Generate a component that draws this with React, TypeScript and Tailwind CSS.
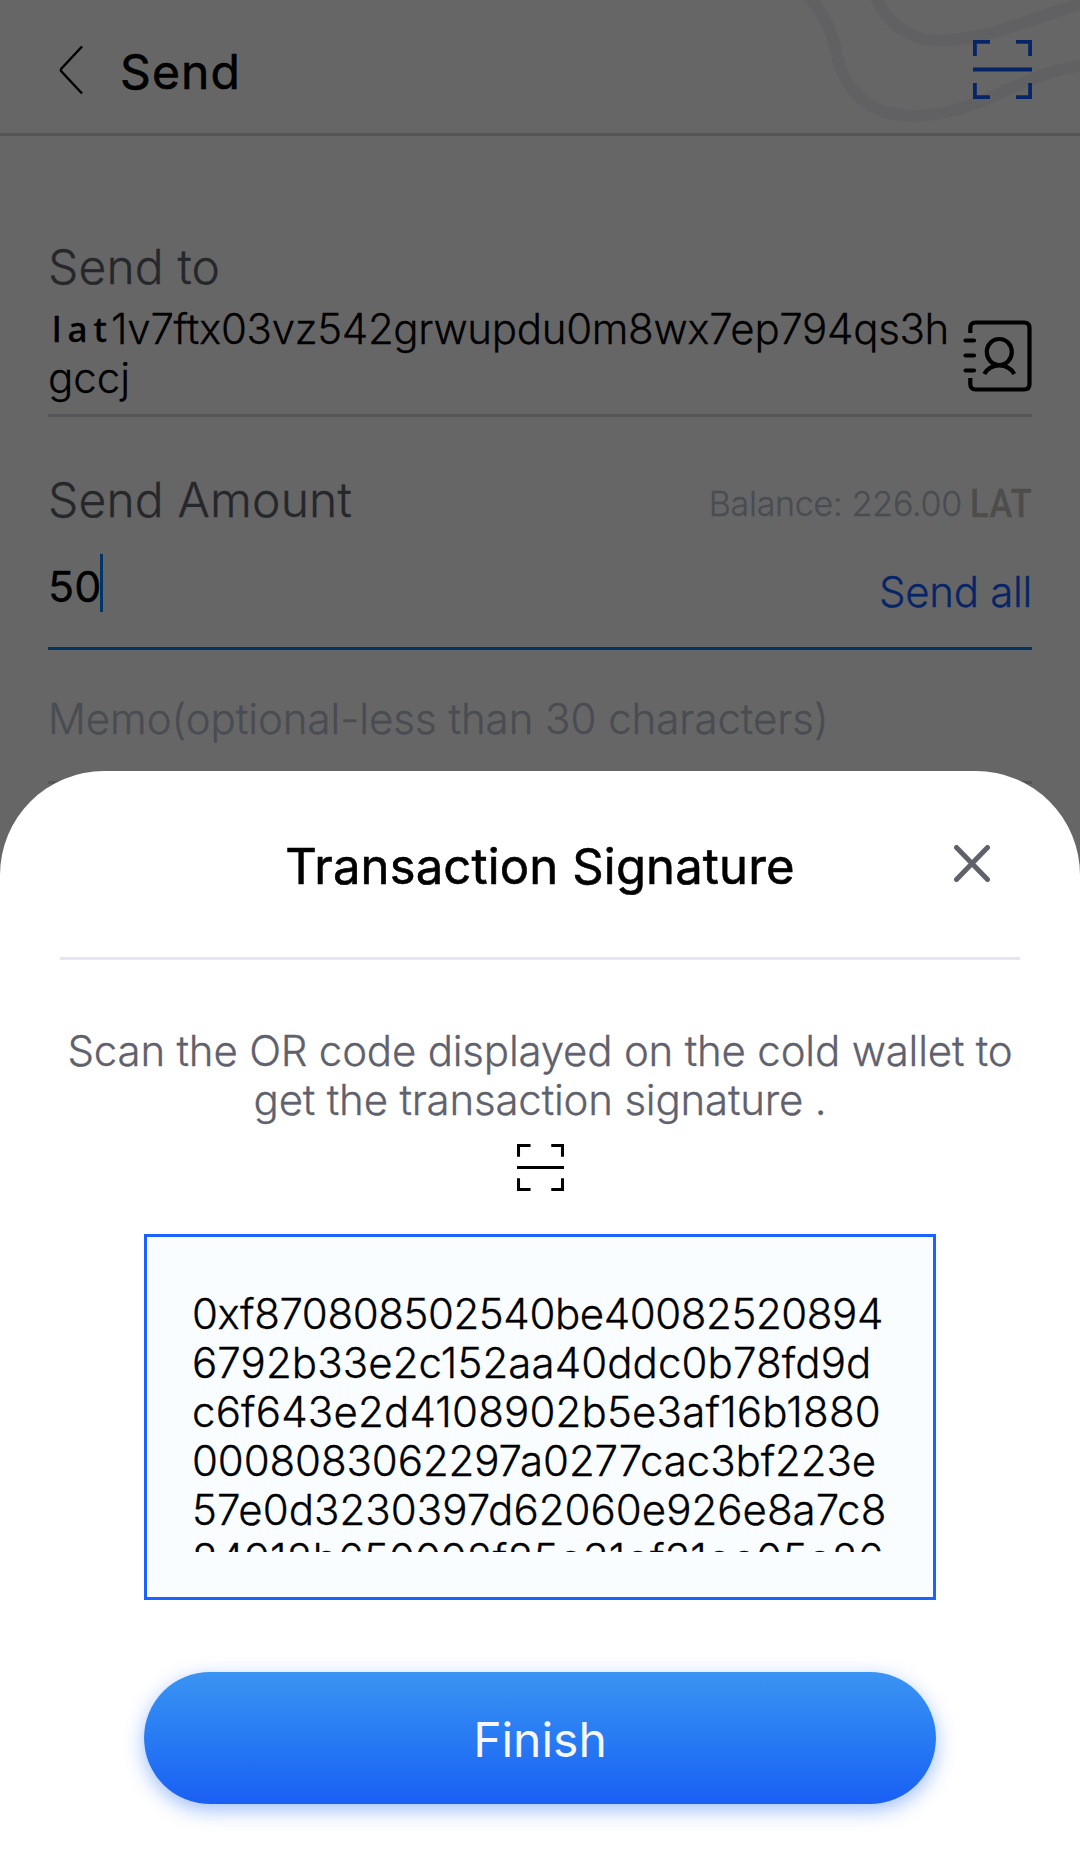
import type { ReactNode } from "react";

const signature = [
  { text: "0xf870808502540be40082520894", cls: "tracking-[-0.41px]" },
  { text: "6792b33e2c152aa40ddc0b78fd9d", cls: "tracking-[0.1px]" },
  { text: "c6f643e2d4108902b5e3af16b1880", cls: "tracking-[0.18px]" },
  { text: "0008083062297a0277cac3bf223e", cls: "tracking-[-0.1px]" },
  { text: "57e0d3230397d62060e926e8a7c8", cls: "tracking-[0.03px]" },
  { text: "84912b650092f85e31ef31ee05e26", cls: "tracking-[0.22px]" },
];

function ScanIcon({ className }: { className: string }) {
  return (
    <svg viewBox="0 0 59 59" fill="none" stroke="currentColor" strokeWidth="3.8" className={className}>
      <path d="M1.9 16V1.9H17M43 1.9H57.100V16M57.100 43V57.100H43M17 57.100H1.9V43M0 29.5H59" />
    </svg>
  );
}

function ContactsIcon() {
  return (
    <svg viewBox="0 0 69 72" fill="none" stroke="#000" strokeWidth="4.2" className="h-[72px] w-[69px]">
      <path d="M7.300 13V8Q7.300 2.500 12.500 2.500H61Q66.500 2.500 66.500 8V64Q66.500 69.500 61 69.500H12.500Q7.300 69.500 7.300 64V58" />
      <path strokeLinecap="round" d="M2.500 20.500H11M2.500 35.500H11M2.500 50.500H11" />
      <ellipse cx="36.300" cy="32" rx="12.500" ry="13" />
      <path d="M21.300 54C28 42.500 44.500 42.500 51.300 54" />
    </svg>
  );
}

function Waves() {
  return (
    <svg viewBox="0 0 320 133" fill="none" stroke="#f3f3f9" strokeWidth="12" className="absolute top-0 right-0 h-[133px] w-[320px]">
      <path d="M46 -6C84 34 70 60 90 86C116 124 170 122 224 100C262 84 290 68 330 65" />
      <path d="M114 -6C132 36 165 45 200 39C250 32 290 10 330 2" />
    </svg>
  );
}

function Label({ children }: { children: ReactNode }) {
  return <div className="text-[48px] leading-[60px] font-light tracking-[0.15px] text-[#5f616d]">{children}</div>;
}

function SendScreen() {
  return (
    <div className="flex flex-col">
      <header className="relative flex h-[136px] items-center border-b-3 border-[#d5d5db] pt-2.5 pr-12 pl-[59px]">
        <Waves />
        <svg viewBox="0 0 24 50" fill="none" stroke="#000" strokeWidth="2.5" className="relative -mt-1 h-[50px] w-6">
          <path d="M23 1.500L2.500 23.500Q1.300 25 2.500 26.500L23 48.500" />
        </svg>
        <h1 className="relative ml-[37px] text-[48px] leading-[60px] tracking-[1.1px] [-webkit-text-stroke:0.6px]">Send</h1>
        <ScanIcon className="relative -mt-1 ml-auto h-[59px] w-[59px] text-[#105cfe]" />
      </header>

      <main className="flex flex-col px-12 pt-[101px]">
        <Label>Send to</Label>
        <div className="mt-[7px] flex justify-between border-b-3 border-[#d5d8de] pb-3">
          <div className="text-[42px] leading-[49px] font-light whitespace-nowrap">
            <div className="flex items-start">
              <span className="w-[63px] pl-1 font-['Noto_Sans'] text-[35px] leading-[50px] font-medium tracking-[6px]">lat</span>
              <span className="tracking-[-0.32px]">1v7ftx03vz542grwupdu0m8wx7ep794qs3h</span>
            </div>
            <div className="-mt-px">gccj</div>
          </div>
          <div className="mt-4 -ml-10 h-[72px]">
            <ContactsIcon />
          </div>
        </div>

        <div className="mt-[53px] flex items-center justify-between">
          <Label>Send Amount</Label>
          <div className="mt-2 flex items-center text-[34px] leading-[52px] font-light text-[#b8bdd0]">
            <span className="tracking-[-0.25px]">Balance: 226.00</span>
            <span className="ml-2 w-[62px] origin-left scale-x-90 font-['Roboto'] text-[38px] font-medium tracking-[0.7px] text-[#c2c0be]">LAT</span>
          </div>
        </div>
        <div className="flex h-[120px] items-start justify-between border-b-3 border-[#0084ff]">
          <div className="flex items-start pt-6">
            <span className="mt-[2px] text-[43px] leading-[60px]">50</span>
            <span className="-ml-px h-[58px] w-[3px] bg-[#0084ff]" />
          </div>
          <span className="mt-8 text-[42px] leading-[60px] font-light tracking-[-0.3px] text-[#105cfe]">Send all</span>
        </div>
        <div className="h-[134px] border-b-3 border-[#d5d5db] pt-[39px] text-[42px] leading-[60px] font-light tracking-[-0.04px] text-[#b8bdd0]">
          Memo(optional-less than 30 characters)
        </div>
      </main>
    </div>
  );
}

function SignatureSheet() {
  return (
    <section className="absolute inset-x-0 top-[771px] bottom-0 flex flex-col items-center rounded-t-[104px] bg-white">
      <div className="relative flex h-[189px] w-[960px] justify-center border-b-3 border-[#e4e7f3] pt-[66px]">
        <h2 className="text-[49px] leading-[60px] tracking-[0.15px] [-webkit-text-stroke:0.6px]">Transaction Signature</h2>
        <svg viewBox="0 0 36 37" stroke="#5f616d" strokeWidth="5" strokeLinecap="round" className="absolute top-[74px] right-[30px] h-[37px] w-9">
          <path d="M2.500 2.500L33.500 34.500M33.500 2.500L2.500 34.500" />
        </svg>
      </div>
      <p className="mt-[66px] text-center text-[42px] leading-[49px] font-light tracking-[-0.2px] whitespace-nowrap text-[#5f616d]">
        Scan the OR code displayed on the cold wallet to
        <br />
        get the transaction signature .
      </p>
      <ScanIcon className="mt-[20px] h-[47px] w-[47px] text-black" />
      <div className="mt-[43px] h-[366px] w-[792px] border-3 border-[#1a63ff] bg-[#f9fdff] pt-[52px] pl-[45px]">
        <div className="h-[263px] overflow-hidden text-[42px] leading-[49px] font-light">
          {signature.map((line) => (
            <div key={line.text} className={line.cls}>
              {line.text}
            </div>
          ))}
        </div>
      </div>
      <button className="mt-[72px] h-[132px] w-[792px] rounded-full bg-linear-to-b from-[#3b93f2] to-[#1a5ff4] pt-1 text-[48px] text-[#f6f6f6] shadow-[0_6px_20px_rgba(26,99,255,0.42)] [-webkit-text-stroke:0px]">
        Finish
      </button>
    </section>
  );
}

export default function App() {
  return (
    <div className="relative h-[1863px] w-[1080px] overflow-hidden bg-white font-['Inter',sans-serif] text-black [-webkit-text-stroke:0.3px]">
      <SendScreen />
      <div className="absolute inset-0 bg-black/60" />
      <SignatureSheet />
    </div>
  );
}
